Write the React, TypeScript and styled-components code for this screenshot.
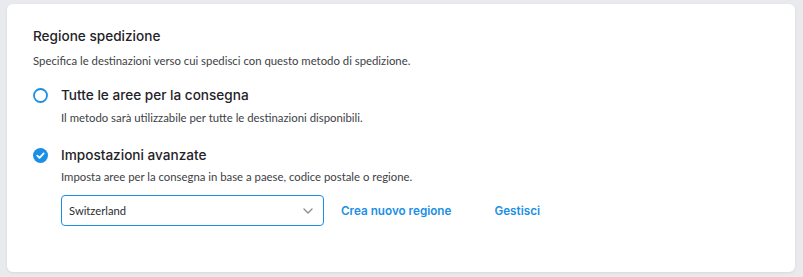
import React from "react";
import styled, { createGlobalStyle } from "styled-components";

const Global = createGlobalStyle`
  html, body { margin: 0; padding: 0; background: #e8eaed; }
  body { font-family: "Lato", "Open Sans", sans-serif; }
`;

const Page = styled.div`
  padding: 4px 8px 5px 7px;
  box-sizing: border-box;
`;

const Card = styled.section`
  background: #ffffff;
  border-radius: 6px;
  box-shadow: 0 1px 3px rgba(0, 0, 0, 0.08);
  height: 268px;
  box-sizing: border-box;
  padding: 22px 26px;
`;

const Title = styled.h2`
  margin: 0;
  font-family: "Inter", "Open Sans", sans-serif;
  font-size: 13.6px;
  font-weight: 500;
  line-height: 20px;
  color: #1f2328;
`;

const Description = styled.p<{ $top?: number; $indent?: number }>`
  margin: ${(p) => p.$top ?? 6}px 0 0 ${(p) => p.$indent ?? 0}px;
  font-size: 11.35px;
  line-height: 18px;
  color: #3d4146;
`;

const Option = styled.div<{ $top: number }>`
  margin-top: ${(p) => p.$top}px;
`;

const OptionHead = styled.label`
  display: flex;
  align-items: center;
  gap: 13px;
  height: 20px;
`;

const OptionTitle = styled.span`
  font-family: "Inter", "Open Sans", sans-serif;
  font-size: 13.6px;
  font-weight: 500;
  color: #1f2328;
`;

const RadioIcon = styled.span`
  display: flex;
  width: 15px;
  height: 15px;
  flex: none;
`;

const Row = styled.div`
  display: flex;
  align-items: center;
  margin: 9px 0 0 28px;
  gap: 17px;
`;

const Select = styled.div`
  width: 263px;
  height: 31px;
  box-sizing: border-box;
  border: 1.5px solid #1a8fe6;
  border-radius: 4px;
  display: flex;
  align-items: center;
  justify-content: space-between;
  padding: 0 10px 0 7px;
  font-size: 11.2px;
  color: #2a2d31;
`;

const LinkButton = styled.a<{ $gap?: number }>`
  font-family: "Inter", "Open Sans", sans-serif;
  font-size: 11.7px;
  font-weight: 600;
  color: #1a8fe6;
  margin-left: ${(p) => p.$gap ?? 0}px;
  cursor: pointer;
`;

const EmptyRadio = () => (
  <RadioIcon>
    <svg width="15" height="15" viewBox="0 0 15 15">
      <circle cx="7.5" cy="7.5" r="6.5" fill="none" stroke="#1a8fe6" strokeWidth="1.8" />
    </svg>
  </RadioIcon>
);

const CheckedRadio = () => (
  <RadioIcon>
    <svg width="15" height="15" viewBox="0 0 15 15">
      <circle cx="7.5" cy="7.5" r="7.5" fill="#1a8fe6" />
      <path d="M4.3 7.7 L6.5 9.8 L10.7 5.4" fill="none" stroke="#fff" strokeWidth="1.8" strokeLinecap="round" strokeLinejoin="round" />
    </svg>
  </RadioIcon>
);

const Chevron = () => (
  <svg width="10" height="6" viewBox="0 0 10 6">
    <path d="M1 1 L5 5 L9 1" fill="none" stroke="#8a9096" strokeWidth="1.4" strokeLinecap="round" strokeLinejoin="round" />
  </svg>
);

export default function App() {
  return (
    <>
      <Global />
      <Page>
        <Card>
          <Title>Regione spedizione</Title>
          <Description>Specifica le destinazioni verso cui spedisci con questo metodo di spedizione.</Description>
          <Option $top={15}>
            <OptionHead>
              <EmptyRadio />
              <OptionTitle>Tutte le aree per la consegna</OptionTitle>
            </OptionHead>
            <Description $top={4} $indent={28}>
              Il metodo sarà utilizzabile per tutte le destinazioni disponibili.
            </Description>
          </Option>
          <Option $top={18}>
            <OptionHead>
              <CheckedRadio />
              <OptionTitle>Impostazioni avanzate</OptionTitle>
            </OptionHead>
            <Description $top={3} $indent={28}>
              Imposta aree per la consegna in base a paese, codice postale o regione.
            </Description>
            <Row>
              <Select>
                <span>Switzerland</span>
                <Chevron />
              </Select>
              <LinkButton>Crea nuovo regione</LinkButton>
              <LinkButton $gap={26}>Gestisci</LinkButton>
            </Row>
          </Option>
        </Card>
      </Page>
    </>
  );
}
